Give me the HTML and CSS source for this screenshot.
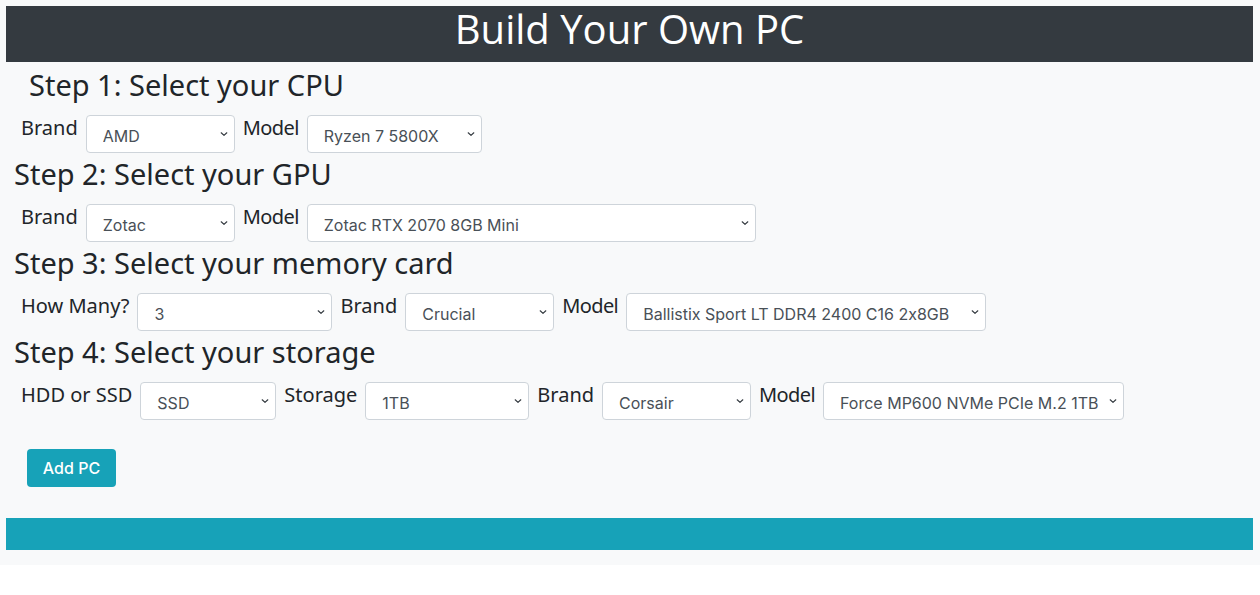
FILE: index.html
```html
<!DOCTYPE html>
<html lang="en">
<head>
<meta charset="utf-8">
<title>Build Your Own PC</title>
<link rel="stylesheet" href="styles.css">
</head>
<body>
<div class="page">
  <header class="banner">
    <h1 class="banner-title">Build Your Own PC</h1>
  </header>
  <main class="builder">
    <section class="step">
      <h3 class="step-title step-title--first">Step 1: Select your CPU</h3>
      <div class="field-row">
        <label class="field-label">Brand</label>
        <select class="field-select w-brand"><option>AMD</option></select>
        <label class="field-label field-label--model">Model</label>
        <select class="field-select w-cpu"><option>Ryzen 7 5800X</option></select>
      </div>
    </section>
    <section class="step">
      <h3 class="step-title">Step 2: Select your GPU</h3>
      <div class="field-row">
        <label class="field-label">Brand</label>
        <select class="field-select w-brand"><option>Zotac</option></select>
        <label class="field-label field-label--model">Model</label>
        <select class="field-select w-gpu"><option>Zotac RTX 2070 8GB Mini</option></select>
      </div>
    </section>
    <section class="step">
      <h3 class="step-title">Step 3: Select your memory card</h3>
      <div class="field-row">
        <label class="field-label">How Many?</label>
        <select class="field-select w-count"><option>3</option></select>
        <label class="field-label">Brand</label>
        <select class="field-select w-brand"><option>Crucial</option></select>
        <label class="field-label field-label--model">Model</label>
        <select class="field-select w-ram"><option>Ballistix Sport LT DDR4 2400 C16 2x8GB</option></select>
      </div>
    </section>
    <section class="step">
      <h3 class="step-title">Step 4: Select your storage</h3>
      <div class="field-row">
        <label class="field-label">HDD or SSD</label>
        <select class="field-select w-type"><option>SSD</option></select>
        <label class="field-label">Storage</label>
        <select class="field-select w-size"><option>1TB</option></select>
        <label class="field-label">Brand</label>
        <select class="field-select w-brand"><option>Corsair</option></select>
        <label class="field-label field-label--model">Model</label>
        <select class="field-select w-ssd"><option>Force MP600 NVMe PCIe M.2 1TB</option></select>
      </div>
    </section>
    <div class="actions">
      <button class="btn-add" type="button">Add PC</button>
    </div>
  </main>
  <footer class="footer-bar"></footer>
</div>
</body>
</html>
```
FILE: styles.css
```css
* { box-sizing: border-box; }

html, body {
  margin: 0;
  padding: 0;
  background: #ffffff;
}

.page {
  background: #f8f9fa;
  padding: 6px 7px 15px 6px;
  font-family: "Noto Sans", "Open Sans", sans-serif;
  color: #212529;
}

.banner {
  background: #343a40;
  height: 56px;
}

.banner-title {
  margin: 0;
  text-align: center;
  color: #ffffff;
  font-family: "Open Sans", "Noto Sans", sans-serif;
  font-weight: 400;
  font-size: 40px;
  line-height: 45px;
}

.builder {
  display: flex;
  flex-direction: column;
}

.step-title {
  margin: 6px 0 14px;
  padding-left: 8px;
  font-size: 29px;
  font-weight: 400;
  line-height: 33px;
}

.step + .step .step-title { margin-top: 4px; }

.step-title--first { padding-left: 23px; }

.field-row {
  display: flex;
  align-items: flex-start;
  gap: 8px;
  padding-left: 15px;
  height: 38px;
}

.field-label {
  font-size: 20px;
  line-height: 24px;
  padding-top: 1px;
  white-space: nowrap;
}

.field-label--model { letter-spacing: -0.6px; }

.field-select {
  -webkit-appearance: none;
  appearance: none;
  height: 38px;
  border: 1px solid #ced4da;
  border-radius: 4px;
  background-color: #ffffff;
  background-image: url("data:image/svg+xml,%3Csvg xmlns='http://www.w3.org/2000/svg' width='8' height='6' viewBox='0 0 8 6'%3E%3Cpath d='M1.2 1.8l2.8 2.6 2.8-2.6' fill='none' stroke='%23343a40' stroke-width='1.2' stroke-linecap='round' stroke-linejoin='round'/%3E%3C/svg%3E");
  background-repeat: no-repeat;
  background-position: right 6px center;
  background-size: 8px 6px;
  padding: 4px 20px 0 16px;
  color: #495057;
  font-family: "Inter", "Noto Sans", sans-serif;
  font-size: 16px;
  font-feature-settings: "calt" 0;
}

.w-brand { width: 149px; }
.w-cpu { width: 175px; }
.w-gpu { width: 449px; }
.w-count { width: 195px; }
.w-ram { width: 360px; }
.w-type { width: 136px; }
.w-size { width: 164px; }
.w-ssd { width: 301px; }

.actions {
  padding: 29px 0 0 21px;
}

.btn-add {
  height: 38px;
  width: 89px;
  border: none;
  border-radius: 4px;
  background: #17a2b8;
  color: #ffffff;
  font-family: "Inter", "Noto Sans", sans-serif;
  font-size: 16px;
  font-weight: 500;
  cursor: pointer;
}

.footer-bar {
  margin-top: 31px;
  height: 32px;
  background: #17a2b8;
}
```
